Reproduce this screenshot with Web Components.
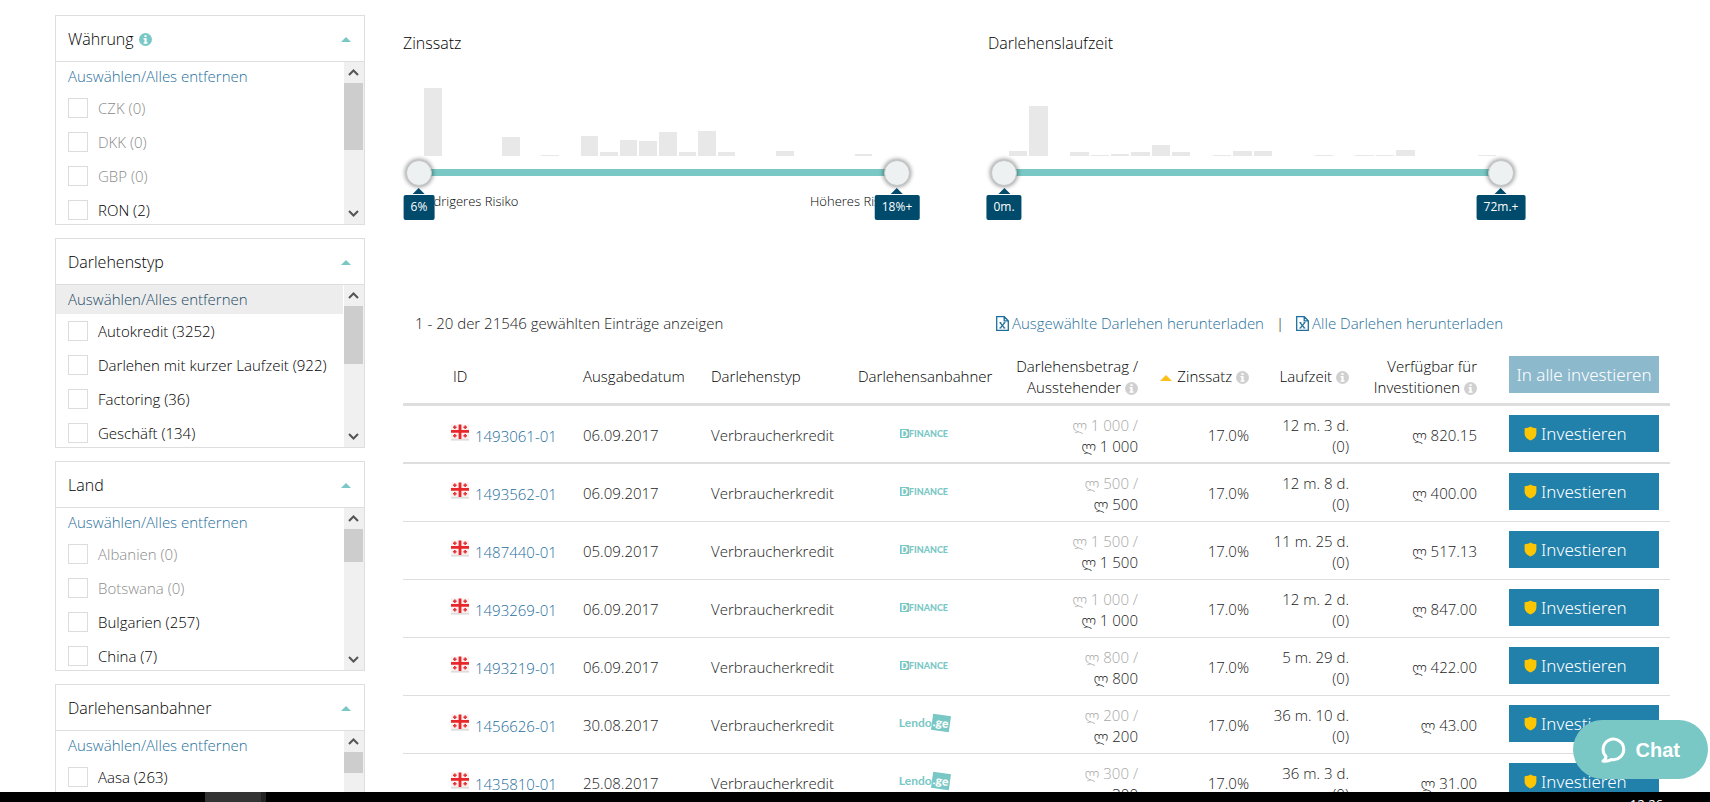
<!DOCTYPE html>
<html lang="de">
<head>
<meta charset="utf-8">
<title>Darlehen investieren</title>
<style>
  html, body { margin: 0; height: 100%; }
  body {
    --teal: #79c8c5;
    --link: #1f6f9c;
    --navy: #004a6b;
    --line: #dedede;
    --blue: #2281ab;
    --button-font: "Noto Sans", "Open Sans", sans-serif;
    font: 340 15px/21px "Open Sans", "Noto Sans", "DejaVu Sans", sans-serif;
    color: #000;
    background: #fff;
  }
</style>
</head>
<body>
<invest-page></invest-page>

<script>
const define = (name, html, setup) => {
  const template = document.createElement('template');
  template.innerHTML = html;
  customElements.define(name, class extends HTMLElement {
    constructor() {
      super();
      this.attachShadow({ mode: 'open' }).append(template.content.cloneNode(true));
    }
    connectedCallback() { if (setup && !this.ready) { this.ready = true; setup(this, this.shadowRoot); } }
  });
};

/* Round information mark */
define('info-dot', `
<style>
  :host { display: inline-block; width: 13px; height: 13px; vertical-align: -2px; color: #d0d0d0; }
  svg { display: block; }
</style>
<svg width="13" height="13" viewBox="0 0 13 13" aria-hidden="true">
  <circle cx="6.5" cy="6.5" r="6.5" fill="currentColor"/>
  <path d="M5.4 2.2h2.2v1.9H5.4zM4.6 5.1h3v4.2h.9v1.4H4.6V9.3h.9V6.5h-.9z" fill="#fff"/>
</svg>`);

/* Page with a fold and an x */
define('sheet-icon', `
<style>:host { display: inline-block; width: 13px; height: 15px; } svg { display: block; }</style>
<svg width="13" height="15" viewBox="0 0 13 15" fill="none" stroke="currentColor" aria-hidden="true">
  <path d="M.7.7h7.6l4 4v9.6H.7zM8.2.8v4h4" stroke-width="1.3"/>
  <path d="M4.2 6.8l4.2 5M8.6 6.8l-4.2 5" stroke-width="1.3"/>
  <path d="M3.4 6.6h2M7.6 6.6h1.9M3.4 12h1.9M7.4 12h2" stroke-width="1"/>
</svg>`);

define('georgia-flag', `
<style>:host { display: inline-block; width: 18px; height: 17px; vertical-align: 1px; } svg { display: block; }</style>
<svg width="18" height="17" viewBox="0 0 18 17" role="img" aria-label="Georgien">
  <path d="M0 14h18v2.6H0z" fill="#dcdcdc"/>
  <path d="M0 .5h18v14.5H0z" fill="#fbeeee"/>
  <path d="M7.6.5h2.8v5.4H18v2.8h-7.6V15H7.6V8.700H0V5.900h7.600z" fill="#e8272b"/>
  <path d="M3 1.400h1.600v1H5.600V4H4.600v1H3V4H2V2.400h1zM13.400 1.400H15v1h1V4h-1v1h-1.600V4h-1V2.400h1zM3 10h1.600v1h1v1.600h-1v1H3v-1H2V11h1zM13.400 10H15v1h1v1.600h-1v1h-1.600v-1h-1V11h1z" fill="#e0383b"/>
</svg>`);

define('originator-logo', `
<style>
  :host { display: inline-flex; align-items: center; justify-content: center; height: 20px; color: #79c8c5; vertical-align: middle; margin-bottom: 5px; }
  .box { background: currentColor; }
  .box b { color: #fff; }
  .d, .l { display: none; align-items: center; }
  :host([name=dfinance]) .d, :host([name=lendo]) .l { display: flex; }
  .d { font: 900 9px/9px Lato, sans-serif; }
  .d .box { padding: 0 1px; }
  .l { font: 700 12px/16px Lato, sans-serif; }
  .l .box { padding: 0 1px; line-height: 16px; transform: rotate(8deg); }
</style>
<span class="d"><span class="box"><b>D</b></span>FINANCE</span>
<span class="l">Lendo<span class="box"><b>.ge</b></span></span>`);

define('filter-panel', `
<style>
  :host { display: block; border: 1px solid var(--line); height: 208px; flex: none; }
  header { height: 44px; display: flex; align-items: center; gap: 5px; padding: 1px 13px 0 12px; border-bottom: 1px solid var(--line); font-size: 16px; }
  info-dot { color: var(--teal); display: none; }
  :host([info]) info-dot { display: block; }
  header button { margin-left: auto; padding: 0; border: 5px solid transparent; border-top: 0; border-bottom-color: var(--teal); background: none; width: 0; height: 0; }
  .body { display: flex; height: 162px; overflow: hidden; }
  .list { flex: 1; min-width: 0; }
  .all { display: flex; align-items: center; height: 29px; padding: 0 12px; margin-right: 1px; color: var(--link); text-decoration: none; }
  :host([active]) .all { background: #ededed; color: #1b4a66; }
  label { display: flex; align-items: center; gap: 10px; height: 34px; padding-left: 12px; }
  label:has(:disabled) { color: #8c8c8c; }
  input { appearance: none; box-sizing: border-box; width: 20px; height: 20px; margin: 0; border: 1px solid #dcdcdc; background: #fff; }
  .bar { width: 20px; background: #f0f0f0; display: flex; flex-direction: column; align-items: flex-start; }
  .bar svg { flex: none; display: block; }
  .thumb { width: 19px; background: #cdcdcd; }
  .bar .down { margin-top: auto; }
</style>
<header><span class="title"></span><info-dot></info-dot><button aria-label="Einklappen"></button></header>
<div class="body">
  <div class="list"><a class="all" href="#">Auswählen/Alles entfernen</a></div>
  <div class="bar">
    <svg width="19" height="21" viewBox="0 0 19 21" fill="none" stroke="#555" stroke-width="2"><path d="M5 13l4.500-4.500L14 13"/></svg>
    <div class="thumb"></div>
    <svg class="down" width="19" height="21" viewBox="0 0 19 21" fill="none" stroke="#555" stroke-width="2"><path d="M5 8l4.500 4.500L14 8"/></svg>
  </div>
</div>`, (host, root) => {
  root.querySelector('.title').textContent = host.getAttribute('heading');
  root.querySelector('.thumb').style.height = host.getAttribute('thumb') + 'px';
  const list = root.querySelector('.list');
  for (const text of host.getAttribute('options').split('|')) {
    const label = document.createElement('label');
    const box = document.createElement('input');
    box.type = 'checkbox';
    box.disabled = text.endsWith('(0)');
    label.append(box, text);
    list.append(label);
  }
});

define('range-filter', `
<style>
  :host { display: block; padding: 0 var(--end) 0 0; }
  h2 { margin: 0; font-size: 16px; font-weight: inherit; line-height: 21px; }
  .chart { display: flex; align-items: flex-end; gap: 2px; height: 70px; margin: 32px 18px 4px 21px; }
  .chart i { flex: 1; background: #e8e8e8; }
  .slider { position: relative; height: 26px; margin-left: 3px; }
  .track { position: absolute; left: 13px; right: 13px; top: 9px; height: 7px; background: var(--teal); }
  input { appearance: none; position: absolute; inset: 0; width: 100%; height: 26px; margin: 0; background: none; pointer-events: none; }
  input::-webkit-slider-thumb { appearance: none; width: 26px; height: 26px; box-sizing: border-box; border-radius: 50%; border: 1px solid #c4c8c8; background: #edf1f2; box-shadow: 0 0 4px 1px rgba(0,0,0,.4); pointer-events: auto; }
  output { position: absolute; top: 35px; height: 25px; padding: 0 7px; border-radius: 2px; background: var(--navy); color: #fff; font: 400 12px/23px "Open Sans", sans-serif; transform: translateX(-50%); left: 13px; }
  output.max { left: calc(100% - 13px); }
  output::before { content: ""; position: absolute; left: calc(50% - 6px); top: -7px; border: 6px solid transparent; border-top: 0; border-bottom-color: var(--navy); }
  .notes { display: flex; justify-content: space-between; padding: 6px 13px 0 11px; font-size: 13px; line-height: 18px; }
</style>
<h2></h2>
<div class="chart"></div>
<div class="slider">
  <div class="track"></div>
  <input class="lo" type="range" min="0" max="100" value="0" aria-label="Minimum">
  <input class="hi" type="range" min="0" max="100" value="100" aria-label="Maximum">
  <output class="min"></output><output class="max"></output>
</div>
<div class="notes"><slot></slot></div>`, (host, root) => {
  root.querySelector('h2').textContent = host.getAttribute('heading');
  root.querySelector('.min').textContent = host.getAttribute('min');
  root.querySelector('.max').textContent = host.getAttribute('max');
  for (const h of host.getAttribute('bars').split(' ')) {
    const bar = document.createElement('i');
    bar.style.height = h + 'px';
    root.querySelector('.chart').append(bar);
  }
});

define('invest-button', `
<style>
  :host { display: block; }
  button { display: flex; align-items: center; justify-content: center; width: 100%; height: 37px; padding: 0; border: 0; background: var(--blue); color: #fff; font: 340 17px/24px var(--button-font); white-space: nowrap; }
  svg { display: none; margin-right: 4px; }
  :host([shield]) button { justify-content: flex-start; padding-left: 15px; }
  :host([shield]) svg { display: block; }
  :host([muted]) button { background: #8db9cd; }
</style>
<button><svg width="13" height="15" viewBox="0 0 13 15" aria-hidden="true"><path d="M6.500.5c1.600 1.200 3.600 1.700 5.900 1.700v5.300c0 3.200-2.300 5.600-5.900 7-3.600-1.400-5.900-3.800-5.900-7V2.200c2.300 0 4.300-.5 5.900-1.700z" fill="#fcc603"/></svg><slot></slot></button>`);

define('loan-table', `
<style>
  :host { display: block; }
  table { width: 100%; table-layout: fixed; border-collapse: separate; border-spacing: 0; color: #1a1a1a; }
  th, td { box-sizing: border-box; text-align: left; font-weight: inherit; white-space: nowrap; padding: 8px 10px 6px; }
  th { height: 59px; padding-bottom: 5px; border-bottom: 3px solid var(--line); color: #000; }
  td { height: 58px; border-bottom: 1px solid var(--line); }
  tr:first-child td { border-bottom-width: 2px; padding-bottom: 5px; }
  .n { text-align: right; }
  .logo { text-align: center; }
  th.act, td.act { vertical-align: top; padding: 9px 11px 0 22px; }
  .id a { color: var(--link); text-decoration: none; margin-left: 6px; }
  th.id { padding-left: 12px; }
  .old { color: #a8a8a8; }
  .sort { display: inline-block; border: 6px solid transparent; border-top: 0; border-bottom: 6px solid #fcc01a; margin-right: 5px; vertical-align: 1px; }
</style>
<table>
  <colgroup><col width="38"><col width="132"><col width="128"><col width="147"><col width="152"><col width="148"><col width="111"><col width="100"><col width="128"><col width="183"></colgroup>
  <thead><tr>
    <th></th><th class="id">ID</th><th>Ausgabedatum</th><th>Darlehenstyp</th><th>Darlehensanbahner</th>
    <th class="n">Darlehensbetrag /<br>Ausstehender <info-dot></info-dot></th>
    <th class="n"><span class="sort"></span>Zinssatz <info-dot></info-dot></th>
    <th class="n">Laufzeit <info-dot></info-dot></th>
    <th class="n">Verfügbar für<br>Investitionen <info-dot></info-dot></th>
    <th class="act"><invest-button muted>In alle investieren</invest-button></th>
  </tr></thead>
  <tbody></tbody>
</table>`, (host, root) => {
  const loans = [
    ['1493061-01', '06.09.2017', 'dfinance', '1 000', '12 m. 3 d.', '820.15'],
    ['1493562-01', '06.09.2017', 'dfinance', '500', '12 m. 8 d.', '400.00'],
    ['1487440-01', '05.09.2017', 'dfinance', '1 500', '11 m. 25 d.', '517.13'],
    ['1493269-01', '06.09.2017', 'dfinance', '1 000', '12 m. 2 d.', '847.00'],
    ['1493219-01', '06.09.2017', 'dfinance', '800', '5 m. 29 d.', '422.00'],
    ['1456626-01', '30.08.2017', 'lendo', '200', '36 m. 10 d.', '43.00'],
    ['1435810-01', '25.08.2017', 'lendo', '300', '36 m. 3 d.', '31.00'],
  ];
  root.querySelector('tbody').innerHTML = loans.map(([id, date, logo, sum, term, open]) => `<tr>
    <td></td><td class="id"><georgia-flag></georgia-flag><a href="#">${id}</a></td><td>${date}</td><td>Verbraucherkredit</td>
    <td class="logo"><originator-logo name="${logo}"></originator-logo></td>
    <td class="n"><span class="old">ლ ${sum} /</span><br>ლ ${sum}</td>
    <td class="n">17.0%</td><td class="n">${term}<br>(0)</td><td class="n">ლ ${open}</td>
    <td class="act"><invest-button shield>Investieren</invest-button></td></tr>`).join('');
});

define('chat-launcher', `
<style>
  :host { position: absolute; right: 2px; bottom: 23px; }
  button { display: flex; align-items: center; gap: 10px; height: 59px; padding: 0 28px; border: 0; border-radius: 30px; background: var(--teal); color: #fff; font: 700 20px/24px "Liberation Sans", Arial, sans-serif; }
</style>
<button><svg width="25" height="26" viewBox="0 0 25 26" fill="none" stroke="#fff" stroke-width="3" stroke-linejoin="round" aria-hidden="true"><path d="M5 19.500A10.300 10.300 0 1 1 10.500 22.500C8 24 5 24.500 2 24c1.800-1 2.800-2.500 3-4.500z"/></svg>Chat</button>`);

define('task-bar', `
<style>
  :host { display: flex; flex: none; height: 10px; overflow: hidden; background: #000; color: #fff; padding-left: 205px; position: relative; }
  .app { width: 56px; background: #333; border-right: 5px solid #222; }
  time { margin: 6px 47px 0 auto; font: 400 13px/13px "Open Sans", sans-serif; }
</style>
<div class="app"></div><time>12:26</time>`);

define('invest-page', `
<style>
  :host { display: flex; flex-direction: column; height: 100vh; overflow: hidden; position: relative; }
  .content { flex: 1; min-height: 0; overflow: hidden; display: flex; gap: 38px; padding: 15px 40px 0 55px; }
  aside { width: 310px; flex: none; display: flex; flex-direction: column; gap: 13px; }
  main { flex: 1; min-width: 0; }
  .filters { display: grid; grid-template-columns: 585fr 682fr; height: 278px; padding-top: 18px; }
  .rate { --end: 78px; }
  .term { --end: 156px; }
  .summary { display: flex; align-items: center; height: 24px; padding: 0 167px 0 12px; margin-bottom: 12px; color: #1a1a1a; }
  .summary nav { display: flex; align-items: center; gap: 12px; margin-left: auto; }
  .summary a { display: flex; align-items: center; gap: 3px; color: var(--link); text-decoration: none; }
</style>
<div class="content">
  <aside>
    <filter-panel heading="Währung" info thumb="67" options="CZK (0)|DKK (0)|GBP (0)|RON (2)"></filter-panel>
    <filter-panel heading="Darlehenstyp" active thumb="58" options="Autokredit (3252)|Darlehen mit kurzer Laufzeit (922)|Factoring (36)|Geschäft (134)"></filter-panel>
    <filter-panel heading="Land" thumb="33" options="Albanien (0)|Botswana (0)|Bulgarien (257)|China (7)"></filter-panel>
    <filter-panel heading="Darlehensanbahner" thumb="21" options="Aasa (263)"></filter-panel>
  </aside>
  <main>
    <section class="filters">
      <range-filter class="rate" heading="Zinssatz" min="6%" max="18%+" bars="68 0 0 0 19 0 1 0 20 4 16 15 24 4 25 4 0 0 5 0 0 0 2 0"><span>Niedrigeres Risiko</span><span>Höheres Risiko</span></range-filter>
      <range-filter class="term" heading="Darlehenslaufzeit" min="0m." max="72m.+" bars="5 50 0 4 1 2 4 11 4 0 1 5 5 0 0 1 0 1 1 6 0 0 0 1"></range-filter>
    </section>
    <div class="summary">
      <span>1 - 20 der 21546 gewählten Einträge anzeigen</span>
      <nav><a href="#"><sheet-icon></sheet-icon>Ausgewählte Darlehen herunterladen</a><span>|</span><a href="#"><sheet-icon></sheet-icon>Alle Darlehen herunterladen</a></nav>
    </div>
    <loan-table></loan-table>
  </main>
</div>
<task-bar></task-bar>
<chat-launcher></chat-launcher>`);
</script>
</body>
</html>
